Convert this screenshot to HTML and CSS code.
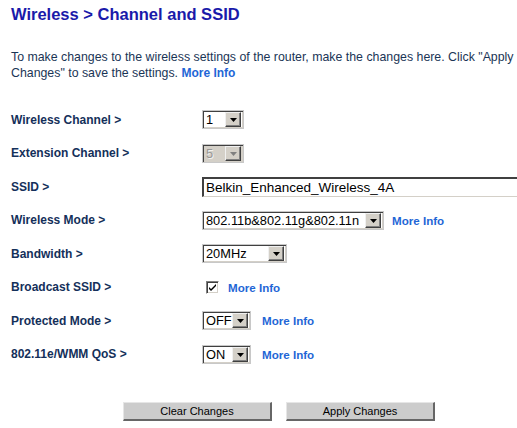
FILE: index.html
```html
<!DOCTYPE html>
<html>
<head>
<meta charset="utf-8">
<link rel="stylesheet" href="styles.css">
</head>
<body>
<div class="page">
  <h1 class="title">Wireless &gt; Channel and SSID</h1>
  <p class="desc">To make changes to the wireless settings of the router, make the changes here. Click "Apply<br>Changes" to save the settings. <a class="more" href="#">More Info</a></p>

  <div class="form">
    <div class="label">Wireless Channel &gt;</div>
    <div class="field">
      <span class="sel w-ch"><select><option>1</option></select><span class="btn"><svg width="7" height="4" viewBox="0 0 7 4"><path d="M0 0h7L3.5 4z" fill="#000"/></svg></span></span>
    </div>

    <div class="label">Extension Channel &gt;</div>
    <div class="field">
      <span class="sel w-ch disabled"><select disabled><option>5</option></select><span class="btn"><svg width="7" height="4" viewBox="0 0 7 4"><path d="M0 0h7L3.5 4z" fill="#808080"/></svg></span></span>
    </div>

    <div class="label">SSID &gt;</div>
    <div class="field">
      <input class="text" type="text" value="Belkin_Enhanced_Wireless_4A">
    </div>

    <div class="label">Wireless Mode &gt;</div>
    <div class="field">
      <span class="sel w-mode"><select><option>802.11b&amp;802.11g&amp;802.11n</option></select><span class="btn"><svg width="7" height="4" viewBox="0 0 7 4"><path d="M0 0h7L3.5 4z" fill="#000"/></svg></span></span>
      <a class="more more-mode" href="#">More Info</a>
    </div>

    <div class="label">Bandwidth &gt;</div>
    <div class="field">
      <span class="sel w-bw"><select><option>20MHz</option></select><span class="btn"><svg width="7" height="4" viewBox="0 0 7 4"><path d="M0 0h7L3.5 4z" fill="#000"/></svg></span></span>
    </div>

    <div class="label">Broadcast SSID &gt;</div>
    <div class="field">
      <span class="check"><svg width="9" height="9" viewBox="0 0 9 9"><path d="M1 4l2 2 5-5v2l-5 5-2-2z" fill="#000"/></svg></span>
      <a class="more more-cb" href="#">More Info</a>
    </div>

    <div class="label">Protected Mode &gt;</div>
    <div class="field">
      <span class="sel w-on"><select><option>OFF</option></select><span class="btn"><svg width="7" height="4" viewBox="0 0 7 4"><path d="M0 0h7L3.5 4z" fill="#000"/></svg></span></span>
      <a class="more" href="#">More Info</a>
    </div>

    <div class="label">802.11e/WMM QoS &gt;</div>
    <div class="field">
      <span class="sel w-on"><select><option>ON</option></select><span class="btn"><svg width="7" height="4" viewBox="0 0 7 4"><path d="M0 0h7L3.5 4z" fill="#000"/></svg></span></span>
      <a class="more" href="#">More Info</a>
    </div>
  </div>

  <div class="actions">
    <button class="pbtn" type="button">Clear Changes</button>
    <button class="pbtn" type="button">Apply Changes</button>
  </div>
</div>
</body>
</html>
```

FILE: styles.css
```css
html, body {
  margin: 0;
  padding: 0;
  background: #fff;
  overflow: hidden;
}
body {
  font-family: "Liberation Sans", Arial, sans-serif;
}
.page {
  width: 517px;
  height: 428px;
  overflow: hidden;
}
.title {
  margin: 0;
  padding: 4px 0 0 11px;
  font-size: 16.5px;
  line-height: 20px;
  font-weight: bold;
  color: #1a1aaa;
}
.desc {
  margin: 0;
  padding: 25px 0 0 11px;
  font-size: 12.35px;
  line-height: 16px;
  color: #1a3556;
  width: 506px;
  white-space: nowrap;
}
.more {
  color: #1f66d6;
  font-weight: bold;
  text-decoration: none;
  font-size: 11.6px;
}
.desc .more {
  font-size: 12px;
  line-height: 14px;
  display: inline-block;
}
.form {
  display: grid;
  grid-template-columns: 191px 1fr;
  grid-auto-rows: 33.5px;
  align-items: center;
  margin-top: 22px;
  padding-left: 11px;
}
.label {
  font-size: 12px;
  font-weight: bold;
  color: #14305a;
}
.field {
  display: flex;
  align-items: center;
  white-space: nowrap;
}
.sel {
  display: inline-flex;
  align-items: center;
  height: 19px;
  box-sizing: border-box;
  border-top: 1px solid #808080;
  border-left: 1px solid #808080;
  border-bottom: 1px solid #fff;
  border-right: 1px solid #fff;
  box-shadow: inset 1px 1px 0 #404040, inset -1px -1px 0 #d4d0c8;
  outline: 1px solid #c8c8c8;
  outline-offset: -1px;
  background: #fff;
  padding: 2px 2px 2px 1px;
}
.sel select {
  -webkit-appearance: none;
  appearance: none;
  border: 0;
  background: transparent;
  padding: 0 0 0 2px;
  margin: 0;
  font-family: "Liberation Sans", Arial, sans-serif;
  font-size: 12.8px;
  color: #000;
  height: 15px;
  line-height: 15px;
  flex: 1;
  min-width: 0;
  outline: none;
}
.sel .btn {
  width: 16px;
  height: 15px;
  box-sizing: border-box;
  background: #d4d0c8;
  border-top: 1px solid #f0f0f0;
  border-left: 1px solid #f0f0f0;
  border-bottom: 1px solid #404040;
  border-right: 1px solid #404040;
  box-shadow: inset -1px -1px 0 #808080;
  display: flex;
  align-items: center;
  justify-content: center;
  flex: none;
}
.sel .btn svg {
  display: block;
  margin-top: 1px;
}
.w-ch { width: 42px; }
.w-mode { width: 182px; }
.w-bw { width: 85px; }
.w-on { width: 49px; }
.disabled {
  background: #d4d0c8;
}
.disabled select {
  color: #808080;
  text-shadow: 1px 1px 0 #fff;
}
.text {
  width: 320px;
  height: 20px;
  box-sizing: border-box;
  border-top: 2px solid #404040;
  border-left: 2px solid #404040;
  border-bottom: 1px solid #d4d0c8;
  border-right: 1px solid #d4d0c8;
  padding: 0 0 0 2px;
  margin: 0;
  font-family: "Liberation Sans", Arial, sans-serif;
  font-size: 13.5px;
  color: #000;
  outline: none;
}
.field .more {
  margin-left: 11px;
}
.field .more-mode {
  margin-left: 8px;
}
.check {
  width: 13px;
  height: 13px;
  box-sizing: border-box;
  margin-left: 4px;
  border-top: 1px solid #808080;
  border-left: 1px solid #808080;
  border-bottom: 1px solid #fff;
  border-right: 1px solid #fff;
  box-shadow: inset 1px 1px 0 #404040, inset -1px -1px 0 #d4d0c8;
  background: #fff;
  display: flex;
  align-items: center;
  justify-content: center;
}
.check svg {
  display: block;
}
.field .more-cb {
  margin-left: 9px;
}
.actions {
  display: flex;
  gap: 14px;
  padding-left: 123px;
  margin-top: 31px;
}
.pbtn {
  width: 149px;
  height: 19px;
  box-sizing: border-box;
  margin: 0;
  padding: 0;
  background: #cccccc;
  border-top: 1px solid #e6e6e6;
  border-left: 1px solid #e6e6e6;
  border-bottom: 2px solid #666;
  border-right: 2px solid #666;
  font-family: "Liberation Sans", Arial, sans-serif;
  font-size: 11px;
  color: #000;
}
```
